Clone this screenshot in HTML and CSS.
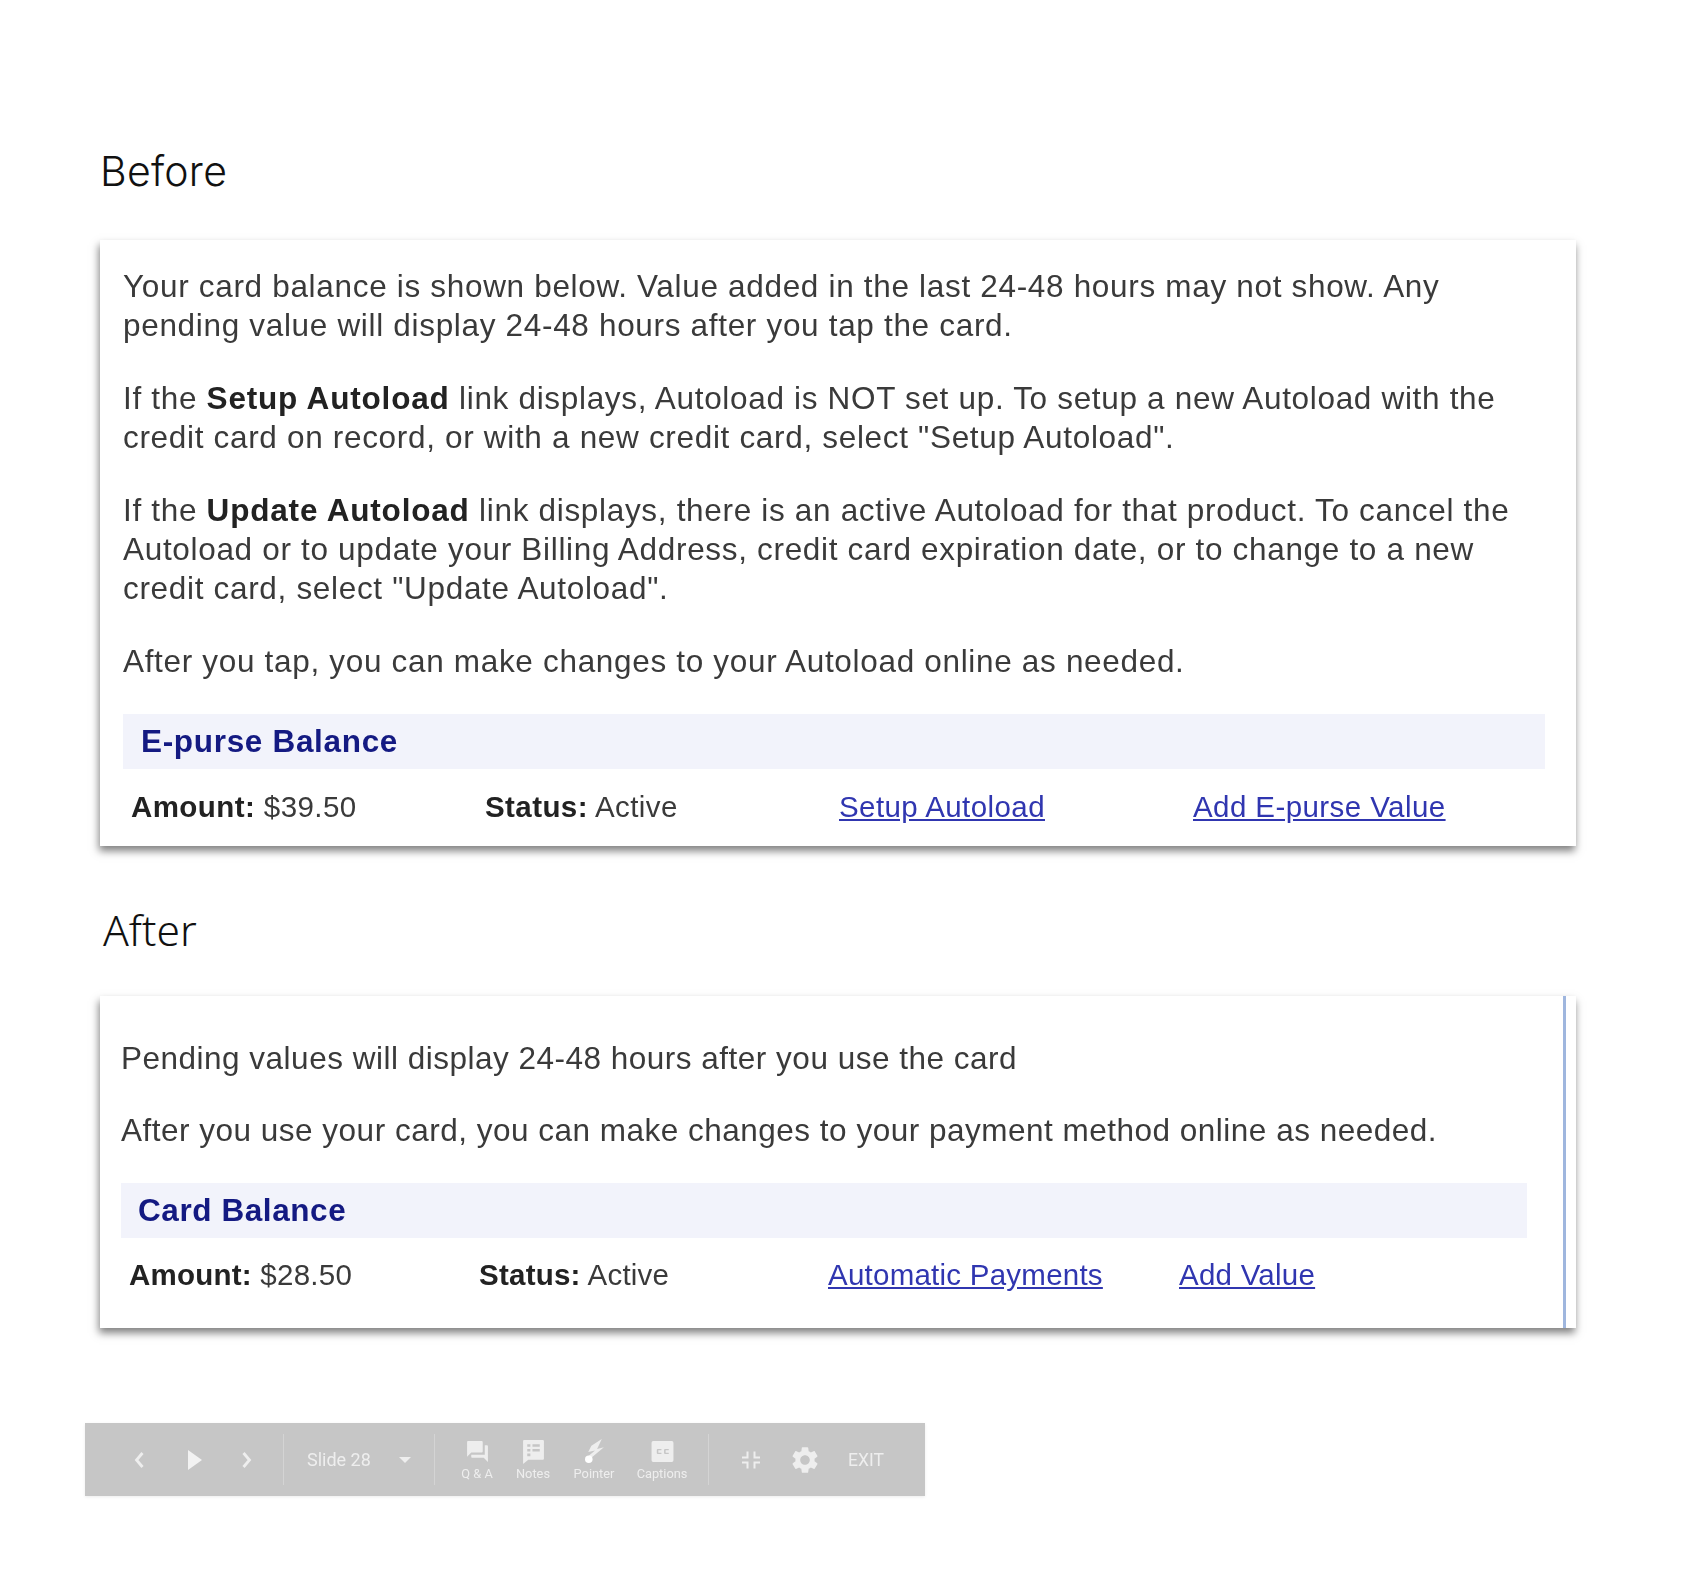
FILE: index.html
```html
<!DOCTYPE html>
<html lang="en">
<head>
<meta charset="utf-8">
<title>Before and After</title>
<link rel="stylesheet" href="styles.css">
</head>
<body>
<main class="page">
  <h2 class="heading heading-before">Before</h2>
  <section class="card card-before">
    <p>Your card balance is shown below. Value added in the last 24-48 hours may not show. Any<br>pending value will display 24-48 hours after you tap the card.</p>
    <p>If the <b>Setup Autoload</b> link displays, Autoload is NOT set up. To setup a new Autoload with the<br>credit card on record, or with a new credit card, select "Setup Autoload".</p>
    <p>If the <b>Update Autoload</b> link displays, there is an active Autoload for that product. To cancel the<br>Autoload or to update your Billing Address, credit card expiration date, or to change to a new<br>credit card, select "Update Autoload".</p>
    <p>After you tap, you can make changes to your Autoload online as needed.</p>
    <div class="band">E-purse Balance</div>
    <div class="row">
      <span><b>Amount:</b> $39.50</span>
      <span><b>Status:</b> Active</span>
      <a href="#">Setup Autoload</a>
      <a href="#">Add E-purse Value</a>
    </div>
  </section>
  <h2 class="heading heading-after">After</h2>
  <section class="card card-after">
    <p>Pending values will display 24-48 hours after you use the card</p>
    <p>After you use your card, you can make changes to your payment method online as needed.</p>
    <div class="band">Card Balance</div>
    <div class="row">
      <span><b>Amount:</b> $28.50</span>
      <span><b>Status:</b> Active</span>
      <a href="#">Automatic Payments</a>
      <a href="#">Add Value</a>
    </div>
  </section>
  <nav class="toolbar">
    <div class="group group-nav">
      <span class="btn"><svg width="16" height="22" viewBox="0 0 16 22"><path d="M11.500 4 5.500 11l6 7" fill="none" stroke="#eee" stroke-width="2.800"/></svg></span>
      <span class="btn btn-play"><svg width="18" height="24" viewBox="0 0 18 24"><path d="M2 2 16 12 2 22z" fill="#f2f2f2"/></svg></span>
      <span class="btn"><svg width="16" height="22" viewBox="0 0 16 22"><path d="M4.500 4l6 7-6 7" fill="none" stroke="#eee" stroke-width="2.800"/></svg></span>
    </div>
    <div class="group group-slide">
      <span class="slide">Slide 28</span>
      <svg width="14" height="8" viewBox="0 0 14 8"><path d="M1 1h12L7 7z" fill="#eee"/></svg>
    </div>
    <div class="group group-tools">
      <span class="tool tool-qa"><svg width="25" height="25" viewBox="0 0 24 24"><path fill="#eee" d="M21 6h-2v9H6v2c0 .55.45 1 1 1h11l4 4V7c0-.55-.45-1-1-1zm-4 6V3c0-.55-.45-1-1-1H3c-.55 0-1 .45-1 1v14l4-4h10c.55 0 1-.45 1-1z"/></svg><small>Q &amp; A</small></span>
      <span class="tool tool-notes"><svg width="25" height="25" viewBox="0 0 24 24"><path fill="#eee" fill-rule="evenodd" d="M3 1h18a1 1 0 0 1 1 1v17a1 1 0 0 1-1 1H7l-5 4V2a1 1 0 0 1 1-1zM6 5v2.500h3V5zm5 0v2.500h7V5zM6 9.500V12h3V9.500zm5 0V12h7V9.500zM6 14v2.500h3V14z"/></svg><small>Notes</small></span>
      <span class="tool tool-pointer"><svg width="25" height="25" viewBox="0 0 24 24"><path fill="#eee" d="M19 0 9 6.500 6 12.500l6.500-1.500-6 5 2.500 2L21 8l-6.500 1.500z"/><circle cx="6.500" cy="19.500" r="3.600" fill="#fff"/></svg><small>Pointer</small></span>
      <span class="tool tool-cc"><svg width="25" height="25" viewBox="0 0 24 24"><path fill="#eee" fill-rule="evenodd" d="M3 2h18a1.500 1.500 0 0 1 1.500 1.500v17A1.500 1.500 0 0 1 21 22H3a1.500 1.500 0 0 1-1.500-1.500v-17A1.500 1.500 0 0 1 3 2zm8 7.500H7.500a1 1 0 0 0-1 1v3a1 1 0 0 0 1 1H11v-1.300H8v-2.400h3zm7 0h-3.500a1 1 0 0 0-1 1v3a1 1 0 0 0 1 1H18v-1.300h-3v-2.400h3z"/></svg><small>Captions</small></span>
    </div>
    <div class="group group-end">
      <svg class="end-exit" width="22" height="22" viewBox="0 0 22 22"><path d="M7.500 2.500v6H2M14.500 2.500v6H20M7.500 19.500v-6H2M14.500 19.500v-6H20" fill="none" stroke="#eee" stroke-width="2"/></svg>
      <svg class="end-gear" width="32" height="32" viewBox="0 0 24 24"><path fill="#eee" d="M19.140 12.940c.04-.3.06-.61.06-.94 0-.32-.02-.64-.07-.94l2.030-1.580c.18-.14.23-.41.12-.61l-1.920-3.320c-.12-.22-.37-.29-.59-.22l-2.390.96c-.5-.38-1.030-.7-1.620-.94l-.36-2.540c-.04-.24-.24-.41-.48-.41h-3.840c-.24 0-.43.17-.47.41l-.36 2.540c-.59.24-1.130.57-1.620.94l-2.390-.96c-.22-.08-.47 0-.59.22L2.740 8.870c-.12.21-.08.47.12.61l2.030 1.580c-.05.3-.09.63-.09.94s.02.64.07.94l-2.030 1.580c-.18.14-.23.41-.12.61l1.920 3.320c.12.22.37.29.59.22l2.390-.96c.5.38 1.030.7 1.620.94l.36 2.540c.05.24.24.41.48.41h3.840c.24 0 .44-.17.47-.41l.36-2.540c.59-.24 1.130-.56 1.620-.94l2.390.96c.22.08.47 0 .59-.22l1.920-3.320c.12-.22.07-.47-.12-.61l-2.010-1.580zM12 15.600c-1.980 0-3.600-1.620-3.600-3.600s1.620-3.600 3.600-3.600 3.600 1.620 3.600 3.600-1.620 3.600-3.600 3.600z"/></svg>
      <span class="exit">EXIT</span>
    </div>
  </nav>
</main>
</body>
</html>
```
FILE: styles.css
```css
* { box-sizing: border-box; }
html, body { margin: 0; background: #fff; }
.page { width: 1699px; height: 1569px; padding: 146px 0 0 100px; overflow: hidden; }
.heading { margin: 0; font-weight: 300; line-height: 50px; color: #111; }
.heading-before { font-family: Inter, sans-serif; font-size: 41px; letter-spacing: .25px; }
.heading-after { font-family: "Noto Sans", sans-serif; font-size: 42.500px; margin: 59px 0 0 3px; }
.card {
  width: 1476px;
  background: #fff;
  box-shadow: -1px 5px 8px rgba(0, 0, 0, .5);
  font-family: "Liberation Sans", Arial, sans-serif;
  font-size: 31.500px;
  letter-spacing: .68px;
  line-height: 39.300px;
  color: #3a3a3a;
}
.card > * { filter: blur(.5px); }
.card b { font-weight: 700; color: #222; letter-spacing: .82px; }
.card p { margin: 0 0 33.200px; }
.card-before { margin-top: 44px; height: 606px; padding: 27px 31px 0 23px; }
.card-after { margin-top: 41px; height: 332px; padding: 43px 49px 0 21px; position: relative; letter-spacing: .5px; }
.card-after p { margin-bottom: 32.500px; }
.card-after::after { content: ""; position: absolute; top: 0; bottom: 0; right: 10px; width: 3px; background: #9fb6de; }
.band {
  height: 55px;
  padding-left: 18px;
  background: #f2f3fb;
  color: #141a82;
  font-weight: 700;
  line-height: 55px;
}
.card-after .band { padding-left: 17px; letter-spacing: .58px; }
.row { display: grid; padding: 18px 0 0 8px; font-size: 29.500px; letter-spacing: .42px; }
.row b { letter-spacing: inherit; }
.card-before .row { grid-template-columns: 354px 354px 354px 1fr; }
.card-after .row { padding-top: 17px; letter-spacing: .24px; grid-template-columns: 350px 349px 351px 1fr; }
.row a { color: #3036b0; text-decoration: underline; justify-self: start; }
.toolbar {
  display: flex;
  width: 840px;
  height: 73px;
  margin: 95px 0 0 -15px;
  align-items: center;
  background: #c6c6c6;
  color: #eee;
  font-family: Roboto, sans-serif;
  box-shadow: 0 1px 3px rgba(0, 0, 0, .08);
}
.toolbar > * { filter: blur(.4px); }
.group { display: flex; align-items: center; height: 51px; }
.group-nav { width: 199px; padding-left: 27px; border-right: 1px solid #d4d4d4; }
.btn { display: flex; width: 54px; justify-content: center; }
.btn-play { padding-left: 3px; }
.group-slide { width: 151px; padding-left: 23px; gap: 27px; border-right: 1px solid #d4d4d4; }
.slide { font-size: 18px; }
.group-tools { width: 274px; padding-left: 14px; border-right: 1px solid #d4d4d4; }
.tool { display: flex; flex-direction: column; align-items: center; gap: 3px; }
.tool small { font-size: 12.800px; line-height: 14px; }
.tool-qa { width: 56px; }
.tool-notes { width: 56px; }
.tool-pointer { width: 66px; }
.tool-cc { width: 70px; }
.group-end { padding-left: 31px; }
.end-gear { margin-left: 27px; }
.exit { margin-left: 27px; font-size: 17.500px; }
```
